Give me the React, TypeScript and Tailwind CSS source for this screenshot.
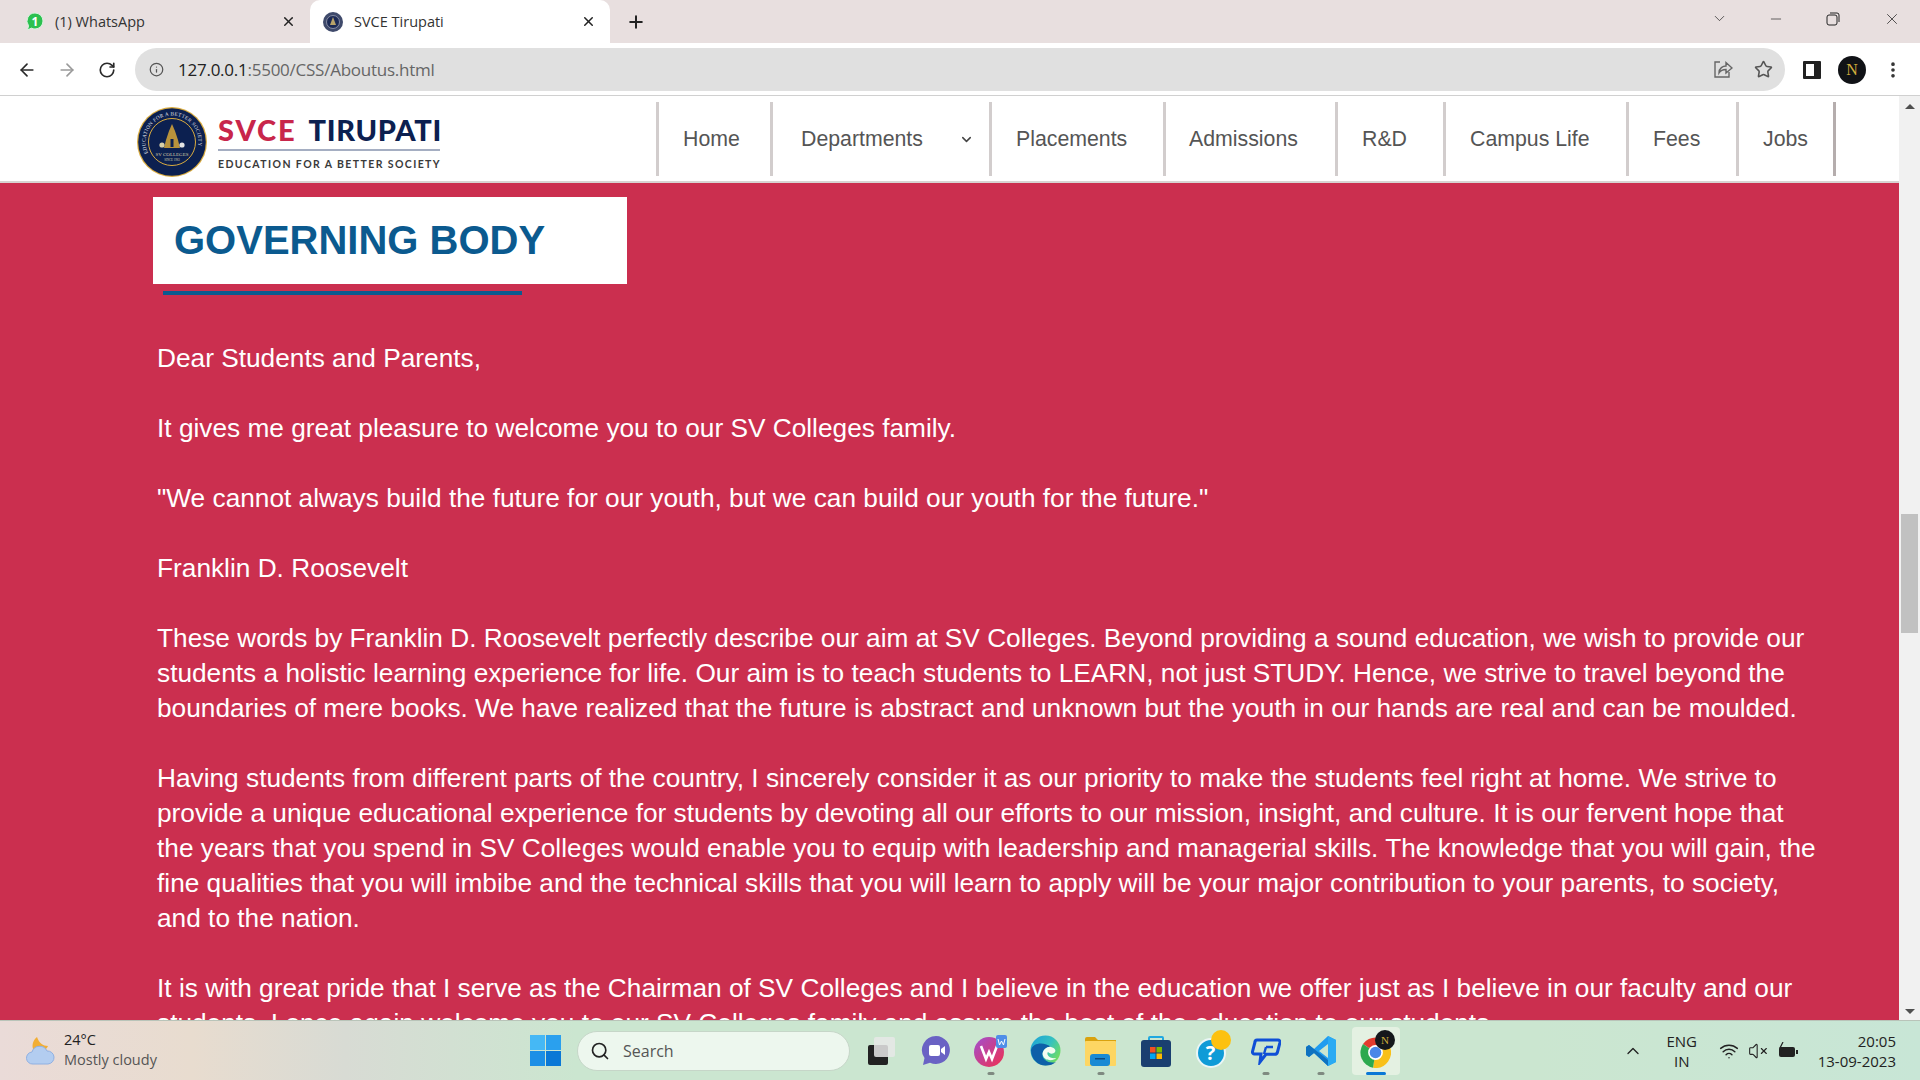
import { ArrowLeft, ArrowRight, RotateCw, Info, Star, X, Plus, ChevronDown, Minus, EllipsisVertical, Search, ChevronUp, Wifi, VolumeX } from "lucide-react";

const navItems = [
  { label: "Home", cls: "w-[114px] pl-6" },
  { label: "Departments", cls: "w-[219px] pl-7", caret: true },
  { label: "Placements", cls: "w-[174px] pl-[24px]" },
  { label: "Admissions", cls: "w-[172px] pl-[23px]" },
  { label: "R&D", cls: "w-[108px] pl-6" },
  { label: "Campus Life", cls: "w-[183px] pl-6" },
  { label: "Fees", cls: "w-[110px] pl-6" },
  { label: "Jobs", cls: "w-[100px] pl-[24px] border-r-[3px] border-r-[#b5adad]" },
];

function Crest({ size }: { size: number }) {
  return (
    <svg width={size} height={size} viewBox="0 0 70 70">
      <defs>
        <path id="crestArc" d="M11 46.2 A26.5 26.5 0 1 1 59 46.2" fill="none" />
      </defs>
      <circle cx="35" cy="35" r="35" fill="#d9ab3f" />
      <circle cx="35" cy="35" r="33.8" fill="#0c2050" />
      <circle cx="35" cy="35" r="23.5" fill="#0c2050" stroke="#d9ab3f" strokeWidth="1" />
      <text fontSize="5.2" fill="#e6e6ea" fontFamily="'Liberation Serif', serif" letterSpacing="0.3">
        <textPath href="#crestArc">EDUCATION FOR A BETTER SOCIETY</textPath>
      </text>
      <path d="M35 17 L38 24 L41 33 L43 41 H27 L29 33 L32 24 Z" fill="#b8923c" />
      <path d="M33.5 32 h3 v8 h-3 Z" fill="#0c2050" />
      <circle cx="25" cy="38" r="2.6" fill="#d8cfa8" />
      <circle cx="45" cy="38" r="2.6" fill="#e4e4e4" />
      <text x="35" y="49" fontSize="5" textAnchor="middle" fill="#d9cfa8" fontFamily="'Liberation Serif', serif">SV COLLEGES</text>
      <text x="35" y="54" fontSize="3" textAnchor="middle" fill="#d9cfa8" fontFamily="'Liberation Serif', serif">SINCE 1983</text>
    </svg>
  );
}

function Logo() {
  return (
    <div className="flex items-center gap-[11px] w-[519px] shrink-0 mt-[6px]">
      <Crest size={70} />
      <div className="w-[222px] font-['Lato',sans-serif]">
        <div className="flex justify-between font-black text-[29px] leading-[32px] h-[32px]">
          <span className="text-[#c8264b] tracking-[1.9px]">SVCE</span>
          <span className="text-[#0c2050] tracking-[0.7px] mr-[-2px]">TIRUPATI</span>
        </div>
        <div className="h-[2px] bg-[#a5aec2] mt-[3px]"></div>
        <div className="mt-[7px] text-[10.5px] leading-[12px] font-bold tracking-[1.4px] text-[#3a3a3a] whitespace-nowrap">EDUCATION FOR A BETTER SOCIETY</div>
      </div>
    </div>
  );
}

function WhatsAppIcon() {
  return (
    <svg width="18" height="20" viewBox="0 0 18 20">
      <path d="M9 1 a8 8 0 0 1 0 16 a8 8 0 0 1 -3.6 -.9 L1.5 18 L2.6 13.8 A8 8 0 0 1 9 1 Z" fill="#2bc04f" stroke="#d8f2de" strokeWidth="1" />
      <text x="9" y="14" fontSize="12" fontWeight="700" textAnchor="middle" fill="#fff" fontFamily="'Open Sans', sans-serif">1</text>
    </svg>
  );
}

function TaskIcon({ children, dot, active }: { children: React.ReactNode; dot?: boolean; active?: boolean }) {
  return (
    <div className={active ? "relative w-[48px] h-[48px] mx-[3.5px] flex items-center justify-center bg-[#e4f1e2] rounded-[4px]" : "relative w-[55px] h-[48px] flex items-center justify-center"}>
      {children}
      {dot && <div className="absolute bottom-0 left-1/2 -translate-x-1/2 w-[7px] h-[3px] rounded-full bg-[#7f8a80]"></div>}
      {active && <div className="absolute bottom-0 left-1/2 -translate-x-1/2 w-[20px] h-[3px] rounded-full bg-[#0a78d6]"></div>}
    </div>
  );
}

function Taskbar() {
  return (
    <footer className="h-[60px] shrink-0 relative flex items-center border-t border-[#b9c4b9] bg-[linear-gradient(90deg,#eadbd8_0%,#e8dccf_10%,#d8dbd4_18%,#cbe6d0_30%,#cbe6d0_80%,#c8e6d6_100%)] font-['Open_Sans',sans-serif] text-[#222]">
      {/* weather */}
      <div className="flex items-center w-[530px] pl-[24px] shrink-0">
        <svg width="32" height="32" viewBox="0 0 32 32">
          <path d="M13 2 C15 8 19 11 24 11 C22 16 15 18 10 16 C7 11 9 5 13 2 Z" fill="#f2ae34" />
          <path d="M9 29 a6 6 0 0 1 -1 -12 a8 8 0 0 1 15 -1 a6.5 6.5 0 0 1 1 13 Z" fill="#b3cdf0" stroke="#8fb0e2" strokeWidth="1" />
        </svg>
        <div className="ml-[8px] text-[14.5px] leading-[20px] mb-[1px]">
          <div>24°C</div>
          <div className="text-[#555]">Mostly cloudy</div>
        </div>
      </div>
      <svg width="31" height="31" viewBox="0 0 31 31" className="shrink-0">
        <rect x="0" y="0" width="15" height="15" fill="#45b8f5" />
        <rect x="16" y="0" width="15" height="15" fill="#2aa0ee" />
        <rect x="0" y="16" width="15" height="15" fill="#1c8fe6" />
        <rect x="16" y="16" width="15" height="15" fill="#0a78d6" />
      </svg>
      <div className="ml-[16px] w-[273px] h-[40px] rounded-full bg-[#edf7ee] border border-[#c6d6c8] flex items-center pl-[12px] shrink-0">
        <Search className="w-[20px] h-[20px] text-[#222]" strokeWidth={2} />
        <span className="ml-[13px] text-[16px] text-[#555]">Search</span>
      </div>
      <div className="ml-[3px] flex items-center shrink-0">
        <TaskIcon>
          <svg width="30" height="30" viewBox="0 0 30 30">
            <rect x="2" y="9" width="20" height="20" rx="2" fill="#222" />
            <rect x="8" y="1" width="21" height="20" rx="2" fill="#e8e8e8" fillOpacity="0.85" />
          </svg>
        </TaskIcon>
        <TaskIcon>
          <svg width="30" height="32" viewBox="0 0 30 32">
            <path d="M15 1 a14 14 0 1 1 -6 26.7 L2 30 L3.5 23 A14 14 0 0 1 15 1 Z" fill="#6a62c4" />
            <rect x="8" y="10" width="11" height="11" rx="2" fill="#fff" />
            <path d="M20 14 L24 11 V20 L20 17 Z" fill="#fff" />
          </svg>
        </TaskIcon>
        <TaskIcon dot>
          <svg width="34" height="34" viewBox="0 0 34 34">
            <defs>
              <linearGradient id="wpsGrad" x1="0" y1="0" x2="1" y2="1">
                <stop offset="0" stopColor="#a04fd0" />
                <stop offset="1" stopColor="#f0304f" />
              </linearGradient>
            </defs>
            <circle cx="15" cy="18" r="15" fill="url(#wpsGrad)" />
            <path d="M7 12 L12 25 L15 18 L18 25 L23 12" fill="none" stroke="#fff" strokeWidth="2.6" />
            <rect x="22" y="1" width="11" height="13" rx="2" fill="#4f8ee8" />
            <path d="M24 5 L25.5 11 L27.5 7 L29.5 11 L31 5" fill="none" stroke="#fff" strokeWidth="1" />
          </svg>
        </TaskIcon>
        <TaskIcon>
          <svg width="31" height="31" viewBox="0 0 31 31">
            <defs>
              <linearGradient id="edgeGrad" x1="0" y1="0" x2="1" y2="0.6">
                <stop offset="0" stopColor="#1aa0d8" />
                <stop offset="0.6" stopColor="#35c1c0" />
                <stop offset="1" stopColor="#6fdc64" />
              </linearGradient>
            </defs>
            <circle cx="15.5" cy="15.5" r="15" fill="url(#edgeGrad)" />
            <path d="M1 15 C1 25 9 31 16 30.5 C20 30.5 23 29.5 26 27 C19 29 12 25 12.5 19 C13 14 18 11 21 12 C15 7 3 7 1 15 Z" fill="#0d5fa8" />
            <path d="M12.5 19 C13 14 18 11 21 12 C25 13 27 16 24 18 C21 19.5 19 18 18 17 C16 19 19 24 26 23 C24 26 14 27 12.5 19 Z" fill="#f4fbf1" />
          </svg>
        </TaskIcon>
        <TaskIcon dot>
          <svg width="31" height="30" viewBox="0 0 31 30">
            <path d="M0 3 a2 2 0 0 1 2 -2 h8 l3 3 h18 v6 H0 Z" fill="#d9a20f" />
            <rect x="0" y="5" width="31" height="25" rx="1" fill="#fdd663" />
            <rect x="5" y="18" width="20" height="12" rx="3" fill="#1a8ad4" />
            <rect x="10" y="22" width="10" height="1.5" fill="#0c4a80" />
          </svg>
        </TaskIcon>
        <TaskIcon>
          <svg width="30" height="32" viewBox="0 0 30 32">
            <path d="M8 7 V3 a1 1 0 0 1 1 -1 h12 a1 1 0 0 1 1 1 v4" fill="none" stroke="#21a8e0" strokeWidth="2" />
            <rect x="0" y="5" width="30" height="27" rx="3" fill="#1a3f70" />
            <rect x="9" y="12" width="5.5" height="5.5" fill="#f25022" />
            <rect x="15.5" y="12" width="5.5" height="5.5" fill="#7fba00" />
            <rect x="9" y="18.5" width="5.5" height="5.5" fill="#00a4ef" />
            <rect x="15.5" y="18.5" width="5.5" height="5.5" fill="#ffb900" />
          </svg>
        </TaskIcon>
        <TaskIcon>
          <div className="relative w-[30px] h-[30px] mt-[4px]">
            <div className="w-[30px] h-[30px] rounded-full bg-[#0f9bd7] border-2 border-[#eaf6f6] text-white font-bold text-[20px] leading-[26px] text-center">?</div>
            <div className="absolute -top-[8px] left-[15px] w-[20px] h-[20px] rounded-full bg-[#fdc10f]"></div>
          </div>
        </TaskIcon>
        <TaskIcon dot>
          <svg width="30" height="28" viewBox="0 0 30 28">
            <path d="M6 3 H27 a2 2 0 0 1 2 2.4 L26.5 15 a3 3 0 0 1 -3 2.3 H15 L9 25 L10 17 H3.5 a2 2 0 0 1 -2 -2.4 L4 5 A2 2 0 0 1 6 3 Z" fill="none" stroke="#0f4fd6" strokeWidth="3" />
            <path d="M15 10 H22 M15 10 L13 17" stroke="#0f4fd6" strokeWidth="2.4" fill="none" />
          </svg>
        </TaskIcon>
        <TaskIcon dot>
          <svg width="30" height="32" viewBox="0 0 30 32">
            <path d="M22 1 L30 5 V27 L22 31 L8 18 L3 22 L0 20 V12 L3 10 L8 14 Z M22 9 L13 16 L22 23 Z" fill="#1f9cf0" fillRule="evenodd" />
            <path d="M22 1 L30 5 V27 L22 31 Z M22 9 V23 L22 23 Z" fill="#2aabf3" />
            <path d="M0 12 L3 10 L22 25 V31 L8 18 L3 22 L0 20 Z" fill="#0f72c0" />
          </svg>
        </TaskIcon>
        <TaskIcon active>
          <div className="relative w-[31px] h-[31px] mt-[3px]">
            <svg width="31" height="31" viewBox="0 0 31 31">
              <path d="M15.5 15.5 L3 7 A15.5 15.5 0 0 1 29 8 Z" fill="#e33b2e" />
              <path d="M15.5 15.5 L29 8 A15.5 15.5 0 0 1 13 30.8 Z" fill="#f8c01a" />
              <path d="M15.5 15.5 L13 30.8 A15.5 15.5 0 0 1 3 7 Z" fill="#2da94f" />
              <circle cx="15.5" cy="15.5" r="7.4" fill="#fff" />
              <circle cx="15.5" cy="15.5" r="5.8" fill="#4a86e8" />
            </svg>
            <div className="absolute -top-[7px] left-[15px] w-[20px] h-[20px] rounded-full bg-[#15171b] text-[#d2ae3c] text-[11px] leading-[20px] text-center font-['Liberation_Serif',serif]">N</div>
          </div>
        </TaskIcon>
      </div>
      {/* tray */}
      <div className="absolute right-0 top-0 h-full text-[#222]">
        <div className="flex items-center h-full pr-[24px]">
          <ChevronUp className="w-[20px] h-[20px]" strokeWidth={1.6} />
          <div className="ml-[21px] w-[36px] text-center text-[15px] leading-[20px]">
            <div>ENG</div>
            <div>IN</div>
          </div>
          <Wifi className="ml-[19px] w-[20px] h-[20px]" strokeWidth={1.8} />
          <VolumeX className="ml-[9px] w-[20px] h-[20px]" strokeWidth={1.3} />
          <svg className="ml-[10px]" width="20" height="18" viewBox="0 0 20 18">
            <rect x="1" y="5" width="16" height="10" rx="2" fill="#222" />
            <rect x="18" y="8" width="2" height="4" fill="#222" />
            <path d="M5 0 L2 6 H5 L3 11" fill="none" stroke="#222" strokeWidth="1.2" />
          </svg>
          <div className="ml-[20px] text-right text-[15px] leading-[20px]">
            <div>20:05</div>
            <div>13-09-2023</div>
          </div>
        </div>
      </div>
    </footer>
  );
}

export default function App() {
  return (
    <div className="w-[1920px] h-[1080px] flex flex-col overflow-hidden bg-white font-['Liberation_Sans',Arial,sans-serif]">
      {/* Tab strip */}
      <div className="h-[43px] shrink-0 bg-[#e8dfdf] flex items-stretch text-[14.5px] text-[#333] font-['Open_Sans',sans-serif]">
        <div className="w-[310px] pl-[26px] pr-[14px] flex items-center">
          <WhatsAppIcon />
          <span className="ml-[11px]">(1) WhatsApp</span>
          <X className="ml-auto w-[15px] h-[15px] text-[#222]" strokeWidth={2.4} />
        </div>
        <div className="w-[300px] pl-[13px] pr-[14px] flex items-center bg-white rounded-t-[10px]">
          <svg width="20" height="20" viewBox="0 0 20 20">
            <circle cx="10" cy="10" r="10" fill="#3f4a6b" />
            <circle cx="10" cy="10" r="6.5" fill="#1c2a55" stroke="#9aa0b5" strokeWidth="0.8" />
            <path d="M10 5 L13 13 H7 Z" fill="#b8a36a" />
          </svg>
          <span className="ml-[11px]">SVCE Tirupati</span>
          <X className="ml-auto w-[15px] h-[15px] text-[#222]" strokeWidth={2.4} />
        </div>
        <div className="ml-[16px] flex items-center">
          <Plus className="w-[20px] h-[20px] text-[#222]" strokeWidth={2.4} />
        </div>
        <div className="ml-auto flex items-center text-[#222] pb-[6px]">
          <ChevronDown className="w-[17px] h-[17px] mr-[40px]" strokeWidth={1} />
          <Minus className="w-[16px] h-[16px] mr-[42px]" strokeWidth={1} />
          <svg className="mr-[43px]" width="14" height="14" viewBox="0 0 14 14" fill="none" stroke="#222">
            <rect x="1" y="3" width="10" height="10" rx="2" />
            <path d="M4 1 h7 a2 2 0 0 1 2 2 v7" />
          </svg>
          <X className="w-[18px] h-[18px] mr-[19px]" strokeWidth={1} />
        </div>
      </div>

      {/* Toolbar */}
      <div className="h-[53px] shrink-0 border-b border-[#d0d0d0] flex items-center pt-[1px] text-[#333]">
        <ArrowLeft className="ml-[17px] w-[20px] h-[20px] text-[#2a2a2a]" strokeWidth={2} />
        <ArrowRight className="ml-[20px] w-[20px] h-[20px] text-[#9a9a9a]" strokeWidth={2} />
        <RotateCw className="ml-[21px] w-[18px] h-[18px] text-[#2a2a2a]" strokeWidth={2.2} />
        <div className="ml-[19px] w-[1650px] h-[43px] rounded-full bg-[#e0e0e0] flex items-center pl-[14px] pr-[12px] font-['Open_Sans',sans-serif] text-[17px]">
          <Info className="w-[15px] h-[15px] text-[#555]" strokeWidth={2} />
          <span className="ml-[14px] tracking-[-0.25px] text-[#222]">127.0.0.1<span className="text-[#666]">:5500/CSS/Aboutus.html</span></span>
          <svg className="ml-auto" width="20" height="20" viewBox="0 0 20 20" fill="none" stroke="#666" strokeWidth="1.4">
            <path d="M7 2 H2 V17 H16 V12" />
            <path d="M6 13 C6 8 10 6 13 6 V2.5 L19 8 L13 13 V9.5 C10 9.5 7.5 10.5 6 13 Z" />
          </svg>
          <Star className="ml-[21px] w-[19px] h-[19px] text-[#555]" strokeWidth={2} />
        </div>
        <svg className="ml-[18px]" width="18" height="18" viewBox="0 0 18 18">
          <rect x="0" y="0" width="18" height="18" rx="1" fill="#222" />
          <rect x="3" y="3" width="8" height="12" fill="#fff" />
        </svg>
        <div className="ml-[17px] w-[28px] h-[28px] rounded-full bg-[#101216] text-[#d2ae3c] text-[16px] leading-[28px] text-center font-['Liberation_Serif',serif]">N</div>
        <EllipsisVertical className="ml-[17px] w-[20px] h-[20px] text-[#333]" strokeWidth={2.4} />
      </div>

      {/* Page + scrollbar */}
      <div className="flex-1 min-h-0 flex">
        <div className="flex-1 min-w-0 flex flex-col">
          <nav className="h-[87px] shrink-0 flex items-center pl-[137px] border-b-2 border-[#d8d4d2]">
            <Logo />
            <ul className="flex h-[74px]">
              {navItems.map((item) => (
                <li key={item.label} className={`flex items-center pt-[2px] border-l-[3px] border-l-[#d2cdcd] text-[21.3px] text-[#555] ${item.cls}`}>
                  {item.label}
                  {item.caret && <ChevronDown className="ml-[36px] w-[15px] h-[15px] text-[#444]" strokeWidth={2.4} />}
                </li>
              ))}
            </ul>
          </nav>
          <main className="flex-1 min-h-0 overflow-hidden bg-[#cb2f4f] text-white text-[26.25px] leading-[35px]">
            <div className="ml-[153px] mt-[14px] w-[474px] h-[87px] bg-white pl-[21px] flex items-center">
              <h1 className="text-[40px] font-bold text-[#0b5a8f] pb-[1px]">GOVERNING BODY</h1>
            </div>
            <div className="ml-[163px] mt-[7px] w-[359px] h-[4px] bg-[#0b5a8f]"></div>
            <div className="ml-[157px] mt-[46px] w-[1665px] flex flex-col gap-[35px]">
              <p>Dear Students and Parents,</p>
              <p>It gives me great pleasure to welcome you to our SV Colleges family.</p>
              <p>"We cannot always build the future for our youth, but we can build our youth for the future."</p>
              <p>Franklin D. Roosevelt</p>
              <p>These words by Franklin D. Roosevelt perfectly describe our aim at SV Colleges. Beyond providing a sound education, we wish to provide our students a holistic learning experience for life. Our aim is to teach students to LEARN, not just STUDY. Hence, we strive to travel beyond the boundaries of mere books. We have realized that the future is abstract and unknown but the youth in our hands are real and can be moulded.</p>
              <p>Having students from different parts of the country, I sincerely consider it as our priority to make the students feel right at home. We strive to provide a unique educational experience for students by devoting all our efforts to our mission, insight, and culture. It is our fervent hope that the years that you spend in SV Colleges would enable you to equip with leadership and managerial skills. The knowledge that you will gain, the fine qualities that you will imbibe and the technical skills that you will learn to apply will be your major contribution to your parents, to society, and to the nation.</p>
              <p>It is with great pride that I serve as the Chairman of SV Colleges and I believe in the education we offer just as I believe in our faculty and our students. I once again welcome you to our SV Colleges family and assure the best of the education to our students.</p>
            </div>
          </main>
        </div>
        <div className="w-[21px] shrink-0 bg-[#f1f1f1] flex flex-col items-center">
          <div className="mt-[8px] w-0 h-0 border-l-[5px] border-r-[5px] border-b-[5px] border-l-transparent border-r-transparent border-b-[#505050]"></div>
          <div className="mt-[405px] w-[17px] h-[119px] bg-[#c1c1c1]"></div>
          <div className="mt-auto mb-[6px] w-0 h-0 border-l-[5px] border-r-[5px] border-t-[5px] border-l-transparent border-r-transparent border-t-[#505050]"></div>
        </div>
      </div>

      <Taskbar />
    </div>
  );
}
